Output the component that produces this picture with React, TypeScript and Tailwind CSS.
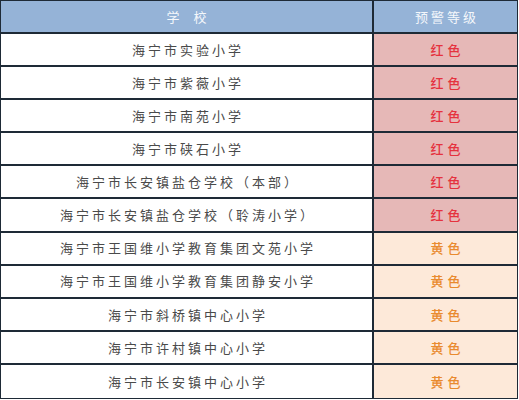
import { Fragment } from "react";

const ROWS: { name: string; level: "red" | "yellow" }[] = [
  { name: "海宁市实验小学", level: "red" },
  { name: "海宁市紫薇小学", level: "red" },
  { name: "海宁市南苑小学", level: "red" },
  { name: "海宁市硖石小学", level: "red" },
  { name: "海宁市长安镇盐仓学校（本部）", level: "red" },
  { name: "海宁市长安镇盐仓学校（聆涛小学）", level: "red" },
  { name: "海宁市王国维小学教育集团文苑小学", level: "yellow" },
  { name: "海宁市王国维小学教育集团静安小学", level: "yellow" },
  { name: "海宁市斜桥镇中心小学", level: "yellow" },
  { name: "海宁市许村镇中心小学", level: "yellow" },
  { name: "海宁市长安镇中心小学", level: "yellow" }
];

export default function App() {
  return (
    <div
      className="w-[519px] h-[400px] bg-white overflow-hidden"
      style={{ fontFamily: '"Noto Sans CJK SC", sans-serif' }}
    >
      <div className="h-[399px] w-[518px] border border-[#1e2a36] grid grid-cols-[373px_1fr] grid-rows-12">
        {/* Header */}
        <div className="bg-[#95b3d7] border-r-2 border-b-2 border-[#1e2a36] flex items-center justify-center text-[#f4f7fb] text-[13px] tracking-[14px] pl-[14px]">
          学校
        </div>
        <div className="bg-[#95b3d7] border-b-2 border-[#1e2a36] flex items-center justify-center text-[#f4f7fb] text-[13px] tracking-[3px] pl-[3px]">
          预警等级
        </div>

        {ROWS.map((r, i) => {
          const last = i === ROWS.length - 1;
          const red = r.level === "red";
          return (
            <Fragment key={r.name}>
              <div
                className={`border-r-2 border-[#1e2a36] flex items-center justify-center text-[#4a4a4a] text-[13px] tracking-[3px] pl-[3px] ${last ? "" : "border-b-2"}`}
              >
                {r.name}
              </div>
              <div
                className={`border-[#1e2a36] flex items-center justify-center text-[13px] font-medium tracking-[4px] pl-[4px] ${last ? "" : "border-b-2"} ${red ? "bg-[#e6b8b7] text-[#e5323e]" : "bg-[#fde9d9] text-[#e98a2e]"}`}
              >
                {red ? "红色" : "黄色"}
              </div>
            </Fragment>
          );
        })}
      </div>
    </div>
  );
}
